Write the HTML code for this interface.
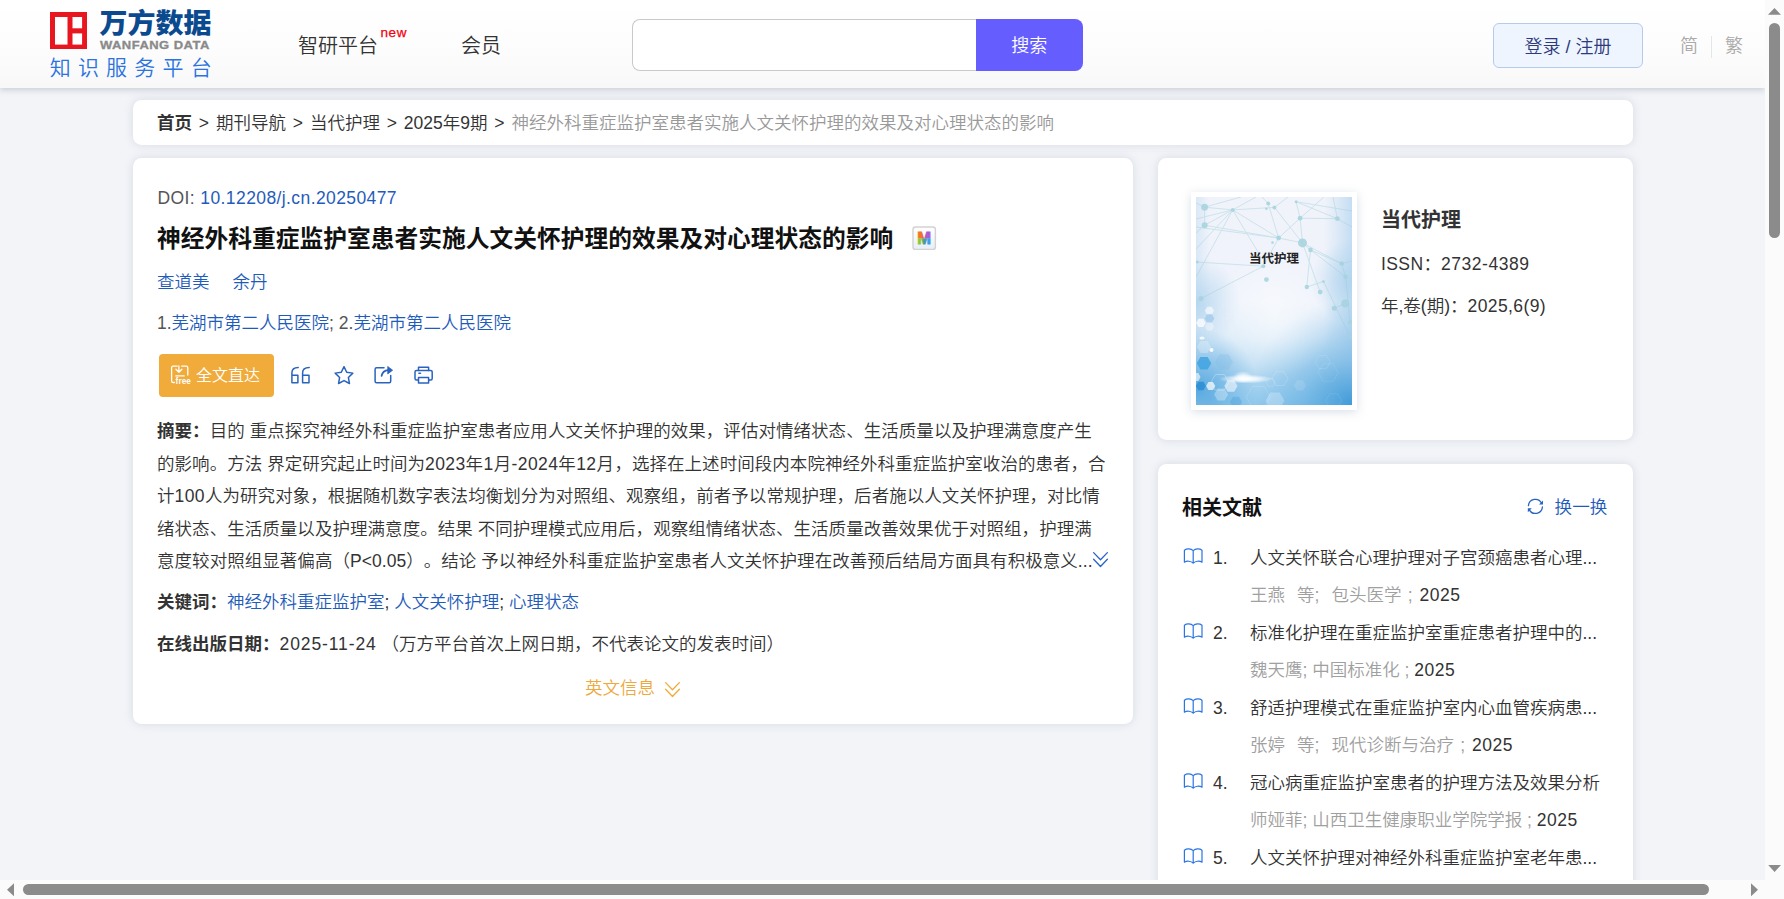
<!DOCTYPE html>
<html lang="zh-CN">
<head>
<meta charset="utf-8">
<title>神经外科重症监护室患者实施人文关怀护理的效果及对心理状态的影响</title>
<style>
*{box-sizing:border-box;margin:0;padding:0}
html,body{width:1784px;height:899px;overflow:hidden}
body{position:relative;background:#f2f4f8;font-family:"Liberation Sans","Noto Sans CJK SC",sans-serif;font-size:17.5px;font-weight:350;color:#333;-webkit-font-smoothing:antialiased;text-spacing-trim:space-all}
a{text-decoration:none;color:inherit}
.abs{position:absolute}
/* header */
#header{position:absolute;left:0;top:0;width:1765px;height:88px;background:linear-gradient(#ffffff 0%,#fdfdfd 50%,#f8f8f8 100%);box-shadow:0 2px 6px rgba(110,118,140,.3)}
.nav{position:absolute;top:31px;font-size:20px;line-height:30px;color:#333;white-space:nowrap}
.new{position:absolute;left:380.5px;top:25.3px;font-size:13.5px;line-height:16px;color:#f5000f;letter-spacing:.6px;-webkit-text-stroke:.25px #f5000f;font-family:"Liberation Sans",sans-serif}
#sinput{position:absolute;left:632px;top:19px;width:345px;height:52px;border:1px solid #c9c9c9;border-right:none;border-radius:8px 0 0 8px;background:#fff}
#sbtn{position:absolute;left:975.5px;top:19px;width:107.3px;height:52px;background:#665dff;border-radius:0 8px 8px 0;color:#fff;font-size:18px;line-height:55px;text-align:center}
#login{position:absolute;left:1493px;top:23px;width:150px;height:45px;border:1px solid #b5cbeb;border-radius:6px;background:#eff5fe;color:#2d3a7c;font-size:18px;line-height:46px;text-align:center;white-space:nowrap}
.lang{position:absolute;top:33.3px;font-size:18px;line-height:26px;color:#aaa}
/* cards */
.card{position:absolute;background:#fff;border-radius:8.5px;box-shadow:0 0 10px rgba(110,118,135,.2)}
#crumb{left:133px;top:100px;width:1500px;height:45px;font-size:17.5px;line-height:46.6px;word-spacing:2px;padding-left:24px;white-space:nowrap;color:#333}
#crumb b{color:#333}
#crumb .cur{color:#999}
#main{left:133px;top:158px;width:1000px;height:566px}
#jcard{left:1158px;top:158px;width:475px;height:282px}
#rcard{left:1158px;top:464px;width:475px;height:460px}
.ln{position:absolute;left:24px;white-space:nowrap;font-size:17.5px;line-height:30px}
.blue{color:#1f5cba}
.d{letter-spacing:.4px}
b{font-weight:700}
</style>
</head>
<body>
<div id="header">
<!-- logo -->
<svg class="abs" style="left:50px;top:11.5px" width="37" height="37.3" viewBox="0 0 37 37.3"><rect x="0" y="0" width="37" height="37.3" fill="#e8161e"/><rect x="5" y="5" width="12.5" height="27.6" fill="#fff"/><rect x="22.5" y="5" width="9.6" height="11.3" fill="#fff"/><rect x="22.5" y="21.4" width="9.6" height="11.2" fill="#fff"/></svg>
<div class="abs" style="left:99.5px;top:7.5px;font-size:28px;line-height:32px;font-weight:900;color:#0b4a8f;letter-spacing:0px;white-space:nowrap;font-family:'Liberation Sans','Noto Sans CJK SC',sans-serif;transform-origin:0 0;transform:scale(1.0,0.98)">万方数据</div>
<div class="abs" style="left:99.5px;top:39px;font-size:11px;line-height:12px;font-weight:700;color:#8a8a8a;letter-spacing:0.4px;-webkit-text-stroke:.3px #8a8a8a;transform-origin:0 0;transform:scaleX(1.18);white-space:nowrap;font-family:'Liberation Sans',sans-serif">WANFANG DATA</div>
<div class="abs" style="left:49.7px;top:54px;font-size:21px;line-height:28px;color:#2a73e0;letter-spacing:7.2px;white-space:nowrap">知识服务平台</div>
<div class="nav" style="left:298px">智研平台</div><div class="new">new</div>
<div class="nav" style="left:461px">会员</div>
<div id="sinput"></div><div id="sbtn">搜索</div>
<div id="login">登录 / 注册</div>
<div class="lang" style="left:1680px">简</div><div class="abs" style="left:1711px;top:36px;width:1px;height:22px;background:#e6e6e6"></div><div class="lang" style="left:1725px">繁</div>
</div>
<div id="crumb" class="card"><b>首页</b> &gt; 期刊导航 &gt; 当代护理 &gt; 2025年9期 &gt; <span class="cur">神经外科重症监护室患者实施人文关怀护理的效果及对心理状态的影响</span></div>
<div id="main" class="card">
<div class="ln d" style="left:24.5px;top:24.5px;color:#555">DOI: <span class="blue">10.12208/j.cn.20250477</span></div>
<div class="ln" id="title" style="top:62.6px;font-size:23.75px;line-height:36px;font-weight:700;color:#111">神经外科重症监护室患者实施人文关怀护理的效果及对心理状态的影响</div>
<svg class="abs" style="left:778px;top:67px" width="26" height="26" viewBox="0 0 26 26"><defs><linearGradient id="mbg" x1="0" y1="0" x2="0" y2="1"><stop offset="0" stop-color="#ffffff"/><stop offset="1" stop-color="#e8eff9"/></linearGradient><linearGradient id="mt" x1="0" y1="0" x2="1" y2="0"><stop offset="0" stop-color="#f57c1c"/><stop offset=".3" stop-color="#f0702a"/><stop offset=".5" stop-color="#d85a5a"/><stop offset=".7" stop-color="#a95bd0"/><stop offset="1" stop-color="#a45bd6"/></linearGradient><linearGradient id="mb2" x1="0" y1="0" x2="1" y2="0"><stop offset="0" stop-color="#8cc63a"/><stop offset=".3" stop-color="#8cc63a"/><stop offset=".5" stop-color="#4c9a8c"/><stop offset=".7" stop-color="#3b9be6"/><stop offset="1" stop-color="#3b9be8"/></linearGradient><clipPath id="mct"><rect x="0" y="0" width="26" height="13.5"/></clipPath><clipPath id="mcb"><rect x="0" y="13.5" width="26" height="13"/></clipPath></defs><rect x="2" y="2" width="22.4" height="22.4" rx="2.5" fill="url(#mbg)" stroke="#d2d2d2" stroke-width="1.4"/><text x="13.0" y="19.3" text-anchor="middle" font-family="Liberation Sans,sans-serif" font-weight="700" font-size="16.5" fill="url(#mt)" stroke="url(#mt)" stroke-width=".9" clip-path="url(#mct)">M</text><text x="13.0" y="19.3" text-anchor="middle" font-family="Liberation Sans,sans-serif" font-weight="700" font-size="16.5" fill="url(#mb2)" stroke="url(#mb2)" stroke-width=".9" clip-path="url(#mcb)">M</text></svg>
<div class="ln blue" style="top:109px">查道美<span style="margin-left:23px">余丹</span></div>
<div class="ln" style="top:150.2px;color:#555">1.<span class="blue">芜湖市第二人民医院</span>; 2.<span class="blue">芜湖市第二人民医院</span></div>
<div class="abs" id="fbtn" style="left:26px;top:196px;width:115px;height:43px;border-radius:4px;background:#f0ab3a;color:#fff;font-size:16px;line-height:44px;padding-left:37px;white-space:nowrap">全文直达</div>
<svg class="abs" style="left:0;top:192px" width="330" height="50" viewBox="133 350 330 50" fill="none" stroke="#2a63bd" stroke-width="1.5" stroke-linecap="round" stroke-linejoin="round">
<g stroke="#fff" stroke-width="1.3"><path d="M177.2 366.1H173.2Q171.6 366.1 171.6 367.7V380.9Q171.6 382.5 173.2 382.5H174.4"/><path d="M181.6 366.1H186.2Q187.8 366.1 187.8 367.7V375"/><path d="M178.9 365.8V371.8M175.9 369.3L178.9 372.3L181.9 369.3"/><path d="M175.8 375.9H184.2"/></g>
<path d="M298.2 367.6C294 367.6 291.9 369.2 291.9 373V382.8H297.9V375.2H291.9"/><path d="M309.2 367.6C305 367.6 302.6 369.2 302.6 373V382.8H309V375.2H302.6"/>
<path d="M344.00 366.70 L346.70 372.28 L352.84 373.13 L348.37 377.42 L349.47 383.52 L344.00 380.60 L338.53 383.52 L339.63 377.42 L335.16 373.13 L341.30 372.28Z"/>
<path d="M384 367.7H376.6Q375.1 367.7 375.1 369.2V381.3Q375.1 382.8 376.6 382.8H389.2Q390.7 382.8 390.7 381.3V375.6"/><path d="M381.6 375.9C382.3 372.4 384.6 370.4 388.2 370.2" stroke-width="1.8"/><path d="M388 366.7L392.6 370.2L388 373.7Z" fill="#2a63bd" stroke-width=".8"/>
<path d="M418.5 370.4V367.2H428.6V370.4"/><path d="M418.3 380H416.5Q415 380 415 378.5V372.1Q415 370.6 416.5 370.6H430.7Q432.2 370.6 432.2 372.1V378.5Q432.2 380 430.7 380H428.8"/><path d="M418.5 377.5H428.6V383H418.5Z"/><path d="M418.9 373.3H420.5"/>
</svg>
<div class="abs" style="left:42.6px;top:218.6px;font-size:8.2px;line-height:9px;font-weight:700;color:#fff;font-family:'Liberation Sans',sans-serif;letter-spacing:.1px">free</div>
<div class="ln" id="abs" style="top:257px;letter-spacing:.045px;line-height:32.5px;color:#333"><b>摘要：</b>目的 重点探究神经外科重症监护室患者应用人文关怀护理的效果，评估对情绪状态、生活质量以及护理满意度产生<br>的影响。方法 界定研究起止时间为<span class="d">2023年1月-2024年12月</span>，选择在上述时间段内本院神经外科重症监护室收治的患者，合<br>计<span class="d">100</span>人为研究对象，根据随机数字表法均衡划分为对照组、观察组，前者予以常规护理，后者施以人文关怀护理，对比情<br>绪状态、生活质量以及护理满意度。结果 不同护理模式应用后，观察组情绪状态、生活质量改善效果优于对照组，护理满<br>意度较对照组显著偏高（P&lt;0.05）。结论 予以神经外科重症监护室患者人文关怀护理在改善预后结局方面具有积极意义...</div>
<div class="ln" style="top:429px"><b>关键词：</b><span class="blue">神经外科重症监护室</span>; <span class="blue">人文关怀护理</span>; <span class="blue">心理状态</span></div>
<div class="ln" style="top:471px"><b>在线出版日期：</b><span style="letter-spacing:.9px">2025-11-24</span> （万方平台首次上网日期，不代表论文的发表时间）</div>
<div class="ln" style="left:452px;top:515px;color:#eda93e">英文信息</div>
<svg class="abs" style="left:958.8px;top:393px" width="17" height="17" viewBox="0 0 17 17" fill="none" stroke="#2a63c8" stroke-width="1.3" stroke-linecap="round" stroke-linejoin="round"><path d="M1.6 1.6L8.5 8.8L15.4 1.6M1.6 8.3L8.5 15.5L15.4 8.3"/></svg>
<svg class="abs" style="left:531px;top:523px" width="17" height="17" viewBox="0 0 17 17" fill="none" stroke="#f0ab3a" stroke-width="1.3" stroke-linecap="round" stroke-linejoin="round"><path d="M1.6 1.6L8.5 8.8L15.4 1.6M1.6 8.3L8.5 15.5L15.4 8.3"/></svg>
</div>
<div id="jcard" class="card">
<div class="abs" id="cover" style="left:33px;top:34px;width:166px;height:218px;background:#fff;box-shadow:0 2px 9px rgba(130,150,175,.3)">
<svg class="abs" style="left:5px;top:5px" width="156" height="208" viewBox="0 0 156 208">
<defs><linearGradient id="cg" x1="0" y1="0" x2="0" y2="1"><stop offset="0" stop-color="#f1f3fa"/><stop offset=".5" stop-color="#eff3fb"/><stop offset=".68" stop-color="#dcebf8"/><stop offset=".85" stop-color="#b9dbf2"/><stop offset="1" stop-color="#93caed"/></linearGradient><radialGradient id="cbr" cx="156" cy="208" r="105" gradientUnits="userSpaceOnUse"><stop offset="0" stop-color="#3a97d7" stop-opacity=".95"/><stop offset=".45" stop-color="#4ba2dc" stop-opacity=".45"/><stop offset="1" stop-color="#5aa9df" stop-opacity="0"/></radialGradient><radialGradient id="cbl" cx="0" cy="192" r="62" gradientUnits="userSpaceOnUse"><stop offset="0" stop-color="#4aa2de" stop-opacity=".9"/><stop offset="1" stop-color="#5aa9df" stop-opacity="0"/></radialGradient><radialGradient id="cl" cx="0" cy="105" r="45" gradientUnits="userSpaceOnUse"><stop offset="0" stop-color="#aed3ee" stop-opacity=".8"/><stop offset="1" stop-color="#aed3ee" stop-opacity="0"/></radialGradient><radialGradient id="cr" cx="156" cy="85" r="42" gradientUnits="userSpaceOnUse"><stop offset="0" stop-color="#aed3ee" stop-opacity=".85"/><stop offset="1" stop-color="#aed3ee" stop-opacity="0"/></radialGradient><radialGradient id="cw" cx="78" cy="118" r="62" gradientUnits="userSpaceOnUse"><stop offset="0" stop-color="#fff" stop-opacity=".55"/><stop offset="1" stop-color="#fff" stop-opacity="0"/></radialGradient><radialGradient id="cf" cx=".5" cy=".5" r=".5"><stop offset="0" stop-color="#fff" stop-opacity="1"/><stop offset=".4" stop-color="#fff" stop-opacity=".8"/><stop offset="1" stop-color="#fff" stop-opacity="0"/></radialGradient><linearGradient id="cre" x1="0" y1="0" x2="1" y2="0"><stop offset="0" stop-color="#c3ddf2" stop-opacity="0"/><stop offset="1" stop-color="#bcd9f1" stop-opacity=".85"/></linearGradient><linearGradient id="cle" x1="0" y1="0" x2="1" y2="0"><stop offset="0" stop-color="#cfe3f4" stop-opacity=".7"/><stop offset="1" stop-color="#cfe3f4" stop-opacity="0"/></linearGradient></defs>
<rect width="156" height="208" fill="url(#cg)"/><rect x="128" width="28" height="208" fill="url(#cre)"/><rect width="14" height="208" fill="url(#cle)"/><rect width="156" height="208" fill="url(#cl)"/><rect width="156" height="208" fill="url(#cr)"/><rect width="156" height="208" fill="url(#cbr)"/><rect width="156" height="208" fill="url(#cbl)"/><rect width="156" height="208" fill="url(#cw)"/>
<g stroke="#9ccfd9" stroke-width="1" opacity=".42"><line x1="8.6" y1="10.2" x2="36.7" y2="12.9"/><line x1="36.7" y1="12.9" x2="78.4" y2="10.4"/><line x1="36.7" y1="12.9" x2="82.6" y2="41"/><line x1="36.7" y1="12.9" x2="62" y2="55"/><line x1="8.6" y1="28.2" x2="82.6" y2="41"/><line x1="8.6" y1="28.2" x2="36.7" y2="12.9"/><line x1="0" y1="22" x2="36.7" y2="12.9"/><line x1="72.2" y1="6.5" x2="82.6" y2="41"/><line x1="78.4" y1="10.4" x2="106.5" y2="45.9"/><line x1="100.1" y1="4.7" x2="104.1" y2="21.2"/><line x1="104.1" y1="21.2" x2="106.5" y2="45.9"/><line x1="104.1" y1="21.2" x2="141.4" y2="21.7"/><line x1="104.1" y1="21.2" x2="82.6" y2="41"/><line x1="82.6" y1="41" x2="106.5" y2="45.9"/><line x1="106.5" y1="45.9" x2="114.5" y2="52.9"/><line x1="114.5" y1="52.9" x2="145.7" y2="66.7"/><line x1="114.5" y1="52.9" x2="110.8" y2="90"/><line x1="106.5" y1="45.9" x2="124.2" y2="95.1"/><line x1="110.8" y1="90" x2="127.5" y2="84.5"/><line x1="0" y1="65" x2="67.3" y2="69.2"/><line x1="67.3" y1="69.2" x2="4.9" y2="101.6"/><line x1="82.6" y1="41" x2="67.3" y2="69.2"/><line x1="0" y1="52" x2="36.7" y2="12.9"/><line x1="141.4" y1="21.7" x2="156" y2="30"/><line x1="100.1" y1="4.7" x2="141.4" y2="21.7"/><line x1="141.4" y1="21.7" x2="137" y2="0"/><line x1="104.1" y1="21.2" x2="128" y2="0"/><line x1="8.6" y1="10.2" x2="45" y2="0"/><line x1="0" y1="6" x2="8.6" y2="10.2"/><line x1="8.6" y1="10.2" x2="8.6" y2="28.2"/><line x1="8.6" y1="28.2" x2="0" y2="36"/><line x1="36.7" y1="12.9" x2="60" y2="0"/><line x1="78.4" y1="10.4" x2="92" y2="0"/><line x1="72.2" y1="6.5" x2="66" y2="0"/><line x1="100.1" y1="4.7" x2="156" y2="14"/><line x1="114.5" y1="52.9" x2="149.6" y2="79.8"/><line x1="145.7" y1="66.7" x2="156" y2="64"/><line x1="145.7" y1="66.7" x2="149.6" y2="79.8"/><line x1="0" y1="80" x2="36.7" y2="12.9"/><line x1="106.5" y1="45.9" x2="145.7" y2="66.7"/><line x1="82.6" y1="41" x2="0" y2="30"/><line x1="149.3" y1="106.4" x2="138.3" y2="111.3"/><line x1="149.6" y1="79.8" x2="154.2" y2="125.3"/><line x1="127.5" y1="84.5" x2="154.2" y2="140"/></g>
<g fill="#a6d3dd" opacity=".85"><circle cx="8.6" cy="10.2" r="3.4"/><circle cx="8.6" cy="28.2" r="3"/><circle cx="36.7" cy="12.9" r="2"/><circle cx="72.2" cy="6.5" r="2"/><circle cx="78.4" cy="10.4" r="2"/><circle cx="70.4" cy="11.7" r="1.3"/><circle cx="100.1" cy="4.7" r="1.5"/><circle cx="104.1" cy="21.2" r="2.4"/><circle cx="141.4" cy="21.7" r="2.4"/><circle cx="82.6" cy="41" r="2.4"/><circle cx="76.5" cy="45.6" r="1.3"/><circle cx="106.5" cy="45.9" r="4.5"/><circle cx="114.5" cy="52.9" r="2.3"/><circle cx="67.3" cy="69.2" r="2"/><circle cx="70.4" cy="82.6" r="2.4"/><circle cx="110.8" cy="90" r="2.2"/><circle cx="127.5" cy="84.5" r="1.3"/><circle cx="124.2" cy="95.1" r="2.4"/><circle cx="145.7" cy="66.7" r="2.4"/><circle cx="149.6" cy="79.8" r="2.4"/><circle cx="1.2" cy="64.9" r="1.5"/><circle cx="4.9" cy="101.6" r="2.5"/><circle cx="149.3" cy="106.4" r="4"/><circle cx="138.3" cy="111.3" r="2.5"/><circle cx="154.2" cy="125.3" r="2.2"/><circle cx="154.2" cy="140" r="2"/></g>
<g><polygon points="9.7,125.9 7.3,130.1 2.5,130.1 0.1,125.9 2.5,121.7 7.3,121.7" fill="#fff" opacity="0.75"/><polygon points="18.1,113.7 15.8,117.7 11.2,117.7 8.9,113.7 11.2,109.7 15.8,109.7" fill="#fff" opacity="0.6"/><polygon points="18.3,121.4 15.9,125.6 11.1,125.6 8.7,121.4 11.1,117.2 15.9,117.2" fill="#9cc8ea" opacity="0.7"/><polygon points="18.0,129.5 15.8,133.4 11.2,133.4 9.0,129.5 11.2,125.6 15.8,125.6" fill="#fff" opacity="0.35"/><polygon points="15.2,166.3 11.6,172.5 4.4,172.5 0.8,166.3 4.4,160.1 11.6,160.1" fill="#3fa3e0" opacity="0.85"/><polygon points="9.9,189.0 7.4,193.3 2.4,193.3 -0.1,189.0 2.4,184.7 7.4,184.7" fill="#2f8fd4" opacity="0.9"/><polygon points="19.3,189.0 17.0,193.0 12.4,193.0 10.1,189.0 12.4,185.0 17.0,185.0" fill="#fff" opacity="0.7"/><polygon points="41.5,189.0 38.2,194.7 31.6,194.7 28.3,189.0 31.6,183.3 38.2,183.3" fill="#fff" opacity="0.55"/><polygon points="32.1,197.5 28.6,203.6 21.6,203.6 18.1,197.5 21.6,191.4 28.6,191.4" fill="#fff" opacity="0.3"/><polygon points="88.5,203.7 83.8,211.9 74.2,211.9 69.5,203.7 74.2,195.5 83.8,195.5" fill="#fff" opacity="0.25"/><polygon points="110.0,188.4 107.0,193.6 101.0,193.6 98.0,188.4 101.0,183.2 107.0,183.2" fill="#fff" opacity="0.12"/><polygon points="15.0,150.0 11.5,156.1 4.5,156.1 1.0,150.0 4.5,143.9 11.5,143.9" fill="#fff" opacity="0.25"/><polygon points="37.0,165.0 32.5,172.8 23.5,172.8 19.0,165.0 23.5,157.2 32.5,157.2" fill="#7fb9e6" opacity="0.3"/><polygon points="4.5,180.0 2.3,183.9 -2.2,183.9 -4.5,180.0 -2.3,176.1 2.3,176.1" fill="#fff" opacity="0.6"/><polygon points="46.0,205.0 43.0,210.2 37.0,210.2 34.0,205.0 37.0,199.8 43.0,199.8" fill="#4a9fdc" opacity="0.4"/></g>
<g fill="none" stroke="#fff" stroke-width=".8" opacity=".6"><polygon points="32.9,185.3 28.4,193.1 19.4,193.1 14.9,185.3 19.4,177.5 28.4,177.5" opacity="0.6"/><polygon points="91.9,181.6 87.9,188.5 79.9,188.5 75.9,181.6 79.9,174.7 87.9,174.7" opacity="0.35"/><polygon points="79.2,185.3 77.0,189.2 72.5,189.2 70.2,185.3 72.5,181.4 77.0,181.4" opacity="0.35"/><polygon points="74.4,200.0 68.4,210.4 56.4,210.4 50.4,200.0 56.4,189.6 68.4,189.6" opacity="0.3"/><polygon points="134.2,165.1 130.5,171.6 123.0,171.6 119.2,165.1 123.0,158.6 130.5,158.6" opacity="0.25"/><polygon points="142.2,175.5 137.2,184.2 127.2,184.2 122.2,175.5 127.2,166.8 137.2,166.8" opacity="0.2"/><polygon points="145.7,203.7 141.7,210.6 133.7,210.6 129.7,203.7 133.7,196.8 141.7,196.8" opacity="0.2"/><polygon points="37.0,115.0 33.5,121.1 26.5,121.1 23.0,115.0 26.5,108.9 33.5,108.9" opacity="0.3"/><polygon points="129.0,115.0 124.5,122.8 115.5,122.8 111.0,115.0 115.5,107.2 124.5,107.2" opacity="0.25"/></g>
<ellipse cx="50" cy="182" rx="27" ry="4.5" fill="url(#cf)"/><ellipse cx="47" cy="180" rx="10" ry="6" fill="url(#cf)" opacity=".8"/><circle cx="15.5" cy="153" r="2" fill="#fff" opacity=".9"/><ellipse cx="6" cy="141" rx="2.6" ry="1.6" fill="#fff" opacity=".8"/>
</svg>
<div class="abs" style="left:0;top:58px;width:166px;text-align:center;font-size:12.5px;line-height:18px;font-weight:700;color:#222">当代护理</div>
</div>
<div class="abs" style="left:223px;top:45.7px;font-size:20px;line-height:32px;font-weight:700;color:#333;white-space:nowrap">当代护理</div>
<div class="abs" style="left:223px;top:90.5px;font-size:17.5px;line-height:30px;color:#333;white-space:nowrap"><span class="d">ISSN</span>：<span style="letter-spacing:.55px">2732-4389</span></div>
<div class="abs" style="left:223px;top:132.7px;font-size:17.5px;line-height:30px;color:#333;white-space:nowrap">年,卷(期)：<span class="d">2025,6(9)</span></div>
</div>
<div id="rcard" class="card">
<div class="abs" style="left:24px;top:28px;font-size:20px;line-height:32px;font-weight:700;color:#111;white-space:nowrap">相关文献</div>
<div class="abs blue" style="left:396.6px;top:26.8px;font-size:17.6px;line-height:32px;white-space:nowrap">换一换</div>
<svg class="abs" style="left:368px;top:33px" width="19" height="19" viewBox="1526 497 19 19" fill="none" stroke="#2a63bd" stroke-width="1.3" stroke-linecap="round"><path d="M1528.4 505.6A7 7 0 0 1 1541.6 503.2"/><path d="M1542.4 507A7 7 0 0 1 1529.2 509.6"/><path d="M1543 500.6V504.6H1539Z" fill="#2a63bd" stroke="none"/><path d="M1527.8 512.2V508.2H1531.8Z" fill="#2a63bd" stroke="none"/></svg>
<svg class="abs" style="left:25px;top:84px" width="21" height="17" viewBox="0 0 21 17" fill="none" stroke="#2a74e4" stroke-width="1.2" stroke-linejoin="round" stroke-linecap="round"><path d="M10.2 2.6C8 0.6 4 0.2 1.4 2.2V14.2C4 12.6 8 13 10.2 15.2C12.4 13 16.4 12.6 19 14.2V2.2C16.4 0.2 12.4 0.6 10.2 2.6ZM10.2 2.6V15.2"/></svg><div class="abs" style="left:55px;top:79.2px;line-height:30px;color:#333">1.</div><div class="abs" style="left:92px;top:79.2px;line-height:30px;color:#333;white-space:nowrap">人文关怀联合心理护理对子宫颈癌患者心理...</div><div class="abs" style="left:92px;top:115.6px;line-height:30px;color:#a0a0a0;white-space:nowrap;word-spacing:1.2px">王燕&nbsp; 等;&nbsp; 包头医学 ; <span style="color:#333;letter-spacing:.5px;margin-left:1px">2025</span></div>
<svg class="abs" style="left:25px;top:159px" width="21" height="17" viewBox="0 0 21 17" fill="none" stroke="#2a74e4" stroke-width="1.2" stroke-linejoin="round" stroke-linecap="round"><path d="M10.2 2.6C8 0.6 4 0.2 1.4 2.2V14.2C4 12.6 8 13 10.2 15.2C12.4 13 16.4 12.6 19 14.2V2.2C16.4 0.2 12.4 0.6 10.2 2.6ZM10.2 2.6V15.2"/></svg><div class="abs" style="left:55px;top:154.2px;line-height:30px;color:#333">2.</div><div class="abs" style="left:92px;top:154.2px;line-height:30px;color:#333;white-space:nowrap">标准化护理在重症监护室重症患者护理中的...</div><div class="abs" style="left:92px;top:190.6px;line-height:30px;color:#a0a0a0;white-space:nowrap">魏天鹰; 中国标准化 ; <span style="color:#333;letter-spacing:.5px">2025</span></div>
<svg class="abs" style="left:25px;top:234px" width="21" height="17" viewBox="0 0 21 17" fill="none" stroke="#2a74e4" stroke-width="1.2" stroke-linejoin="round" stroke-linecap="round"><path d="M10.2 2.6C8 0.6 4 0.2 1.4 2.2V14.2C4 12.6 8 13 10.2 15.2C12.4 13 16.4 12.6 19 14.2V2.2C16.4 0.2 12.4 0.6 10.2 2.6ZM10.2 2.6V15.2"/></svg><div class="abs" style="left:55px;top:229.2px;line-height:30px;color:#333">3.</div><div class="abs" style="left:92px;top:229.2px;line-height:30px;color:#333;white-space:nowrap">舒适护理模式在重症监护室内心血管疾病患...</div><div class="abs" style="left:92px;top:265.6px;line-height:30px;color:#a0a0a0;white-space:nowrap;word-spacing:1.2px">张婷&nbsp; 等;&nbsp; 现代诊断与治疗 ; <span style="color:#333;letter-spacing:.5px;margin-left:1px">2025</span></div>
<svg class="abs" style="left:25px;top:309px" width="21" height="17" viewBox="0 0 21 17" fill="none" stroke="#2a74e4" stroke-width="1.2" stroke-linejoin="round" stroke-linecap="round"><path d="M10.2 2.6C8 0.6 4 0.2 1.4 2.2V14.2C4 12.6 8 13 10.2 15.2C12.4 13 16.4 12.6 19 14.2V2.2C16.4 0.2 12.4 0.6 10.2 2.6ZM10.2 2.6V15.2"/></svg><div class="abs" style="left:55px;top:304.2px;line-height:30px;color:#333">4.</div><div class="abs" style="left:92px;top:304.2px;line-height:30px;color:#333;white-space:nowrap">冠心病重症监护室患者的护理方法及效果分析</div><div class="abs" style="left:92px;top:340.6px;line-height:30px;color:#a0a0a0;white-space:nowrap">师娅菲; 山西卫生健康职业学院学报 ; <span style="color:#333;letter-spacing:.5px">2025</span></div>
<svg class="abs" style="left:25px;top:384px" width="21" height="17" viewBox="0 0 21 17" fill="none" stroke="#2a74e4" stroke-width="1.2" stroke-linejoin="round" stroke-linecap="round"><path d="M10.2 2.6C8 0.6 4 0.2 1.4 2.2V14.2C4 12.6 8 13 10.2 15.2C12.4 13 16.4 12.6 19 14.2V2.2C16.4 0.2 12.4 0.6 10.2 2.6ZM10.2 2.6V15.2"/></svg><div class="abs" style="left:55px;top:379.2px;line-height:30px;color:#333">5.</div><div class="abs" style="left:92px;top:379.2px;line-height:30px;color:#333;white-space:nowrap">人文关怀护理对神经外科重症监护室老年患...</div><div class="abs" style="left:92px;top:415.6px;line-height:30px;color:#a0a0a0;white-space:nowrap;word-spacing:1.2px">陈丽&nbsp; 等;&nbsp; 中国医药指南 ; <span style="color:#333;letter-spacing:.5px;margin-left:1px">2025</span></div>
</div>
<!-- SCROLLBARS -->
<div class="abs" style="left:1765px;top:0;width:19px;height:899px;background:#fbfbfb"></div>
<div class="abs" style="left:0;top:880px;width:1784px;height:19px;background:#fbfbfb"></div>
<div class="abs" style="left:1769px;top:23px;width:11px;height:215px;border-radius:5.5px;background:#8b8b8b"></div>
<div class="abs" style="left:23px;top:884px;width:1686px;height:11px;border-radius:5.5px;background:#8b8b8b"></div>
<svg class="abs" style="left:1765px;top:0" width="19" height="899" viewBox="0 0 19 899"><path d="M3 14.8h13l-6.5-6.8z M3.2 865h12.8l-6.4 7z" fill="#8b8b8b"/></svg>
<svg class="abs" style="left:0;top:880px" width="1784" height="19" viewBox="0 0 1784 19"><path d="M14 3.3v13l-7-6.5z M1751 3.3v13l7-6.5z" fill="#8b8b8b"/></svg>
</body>
</html>
